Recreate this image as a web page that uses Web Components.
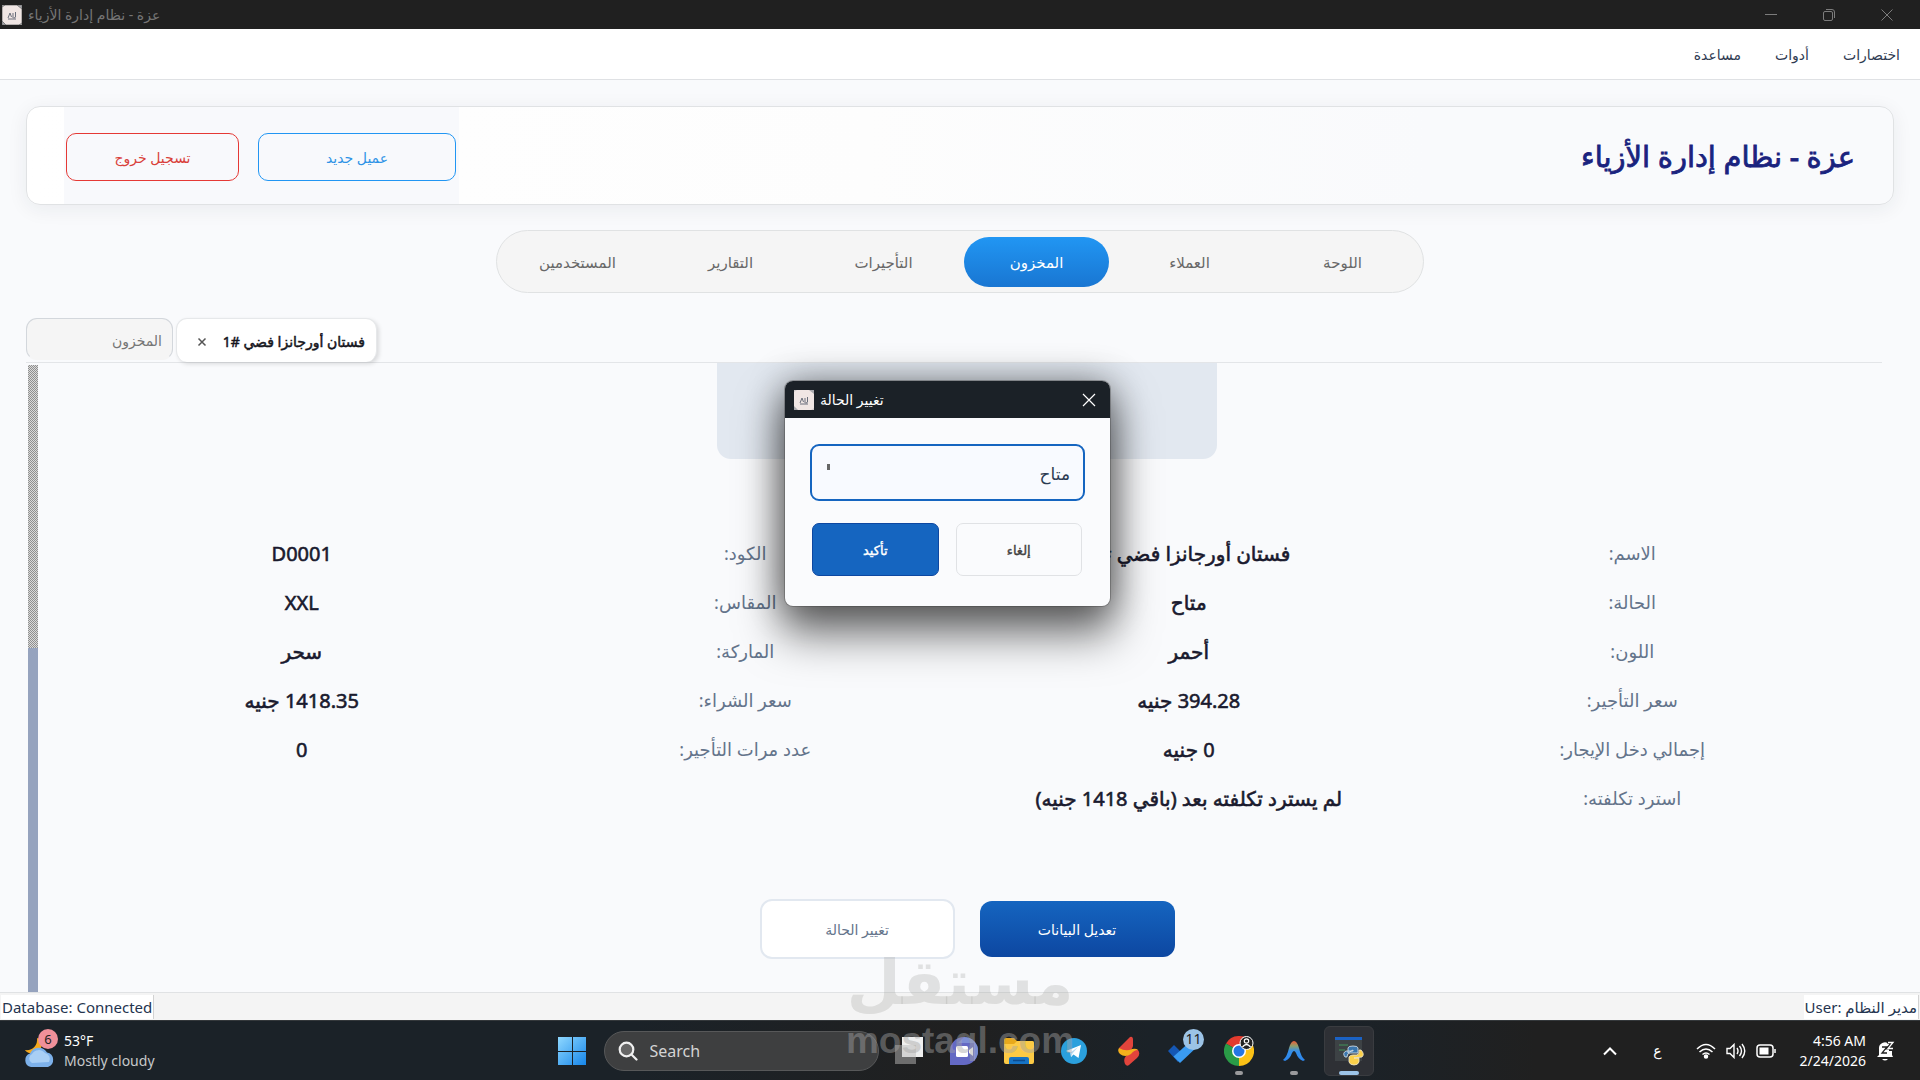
<!DOCTYPE html>
<html lang="ar">
<head>
<meta charset="utf-8">
<title>عزة - نظام إدارة الأزياء</title>
<style>
  html, body { margin: 0; height: 100%; }
  body { font-family: "Noto Sans", "DejaVu Sans", sans-serif; font-size: 15px; overflow: hidden; }
</style>
</head>
<body>
<app-desktop></app-desktop>

<script>
const base = `*, *::before, *::after { box-sizing: border-box; } button, select, input { font: inherit; margin: 0; } svg { display: block; }`;

function component(name, css, html, setup) {
  const template = document.createElement('template');
  template.innerHTML = `<style>${base}${css}</style>${html}`;
  customElements.define(name, class extends HTMLElement {
    constructor() {
      super();
      this.attachShadow({ mode: 'open' }).append(template.content.cloneNode(true));
    }
    connectedCallback() { if (setup) setup(this, this.shadowRoot); }
  });
}

const appIcon = size => `<svg width="${size}" height="${size}" viewBox="0 0 20 20" aria-hidden="true">
  <rect width="20" height="20" fill="#f0e6e4"/>
  <path d="M0 16L4 20H0zM15 0h5v4z" fill="#a9a9ae"/><path d="M0 0h3L0 2zM20 18v2h-3z" fill="#cfc9ca"/>
  <path d="M6 13l2-5 1.500 4M11 8v5M13.500 7v5q0 1-2 1M6 14h8" fill="none" stroke="#6a6f7c" stroke-width="1"/></svg>`;

component('title-bar', `
  :host { display: flex; align-items: center; height: 29px; padding: 0 4px 0 2px; background: #202020; color: #757575; direction: ltr; }
  span { flex: 1; padding-left: 6px; font-size: 14px; line-height: 20px; }
  button { width: 58px; height: 29px; border: 0; background: none; display: grid; place-items: center; padding: 0; }
  .tools { display: flex; }
  svg { fill: none; stroke: #7c7c7c; }`,
  `${appIcon(20)}<span dir="auto" style="text-align:left"><slot></slot></span>
  <div class="tools">
  <button aria-label="Minimize"><svg width="14" height="14"><path d="M1 6.500h12"/></svg></button>
  <button aria-label="Restore"><svg width="14" height="14"><rect x="1.500" y="3.500" width="9" height="9" rx="1.500"/><path d="M4 1.500h6a2.500 2.500 0 0 1 2.500 2.500v6"/></svg></button>
  <button aria-label="Close"><svg width="14" height="14"><path d="M1.500 1.500l11 11M12.500 1.500l-11 11"/></svg></button></div>`);

component('menu-bar', `
  :host { display: flex; align-items: center; gap: 34px; height: 51px; padding: 2px 20px 0; background: #fff; border-bottom: 1px solid #dfe1e4; direction: rtl; }
  button { border: 0; padding: 0; background: none; color: #2f3b52; font-size: 14px; line-height: 24px; }`,
  `<button>اختصارات</button><button>أدوات</button><button>مساعدة</button>`);

component('app-button', `
  :host { display: block; }
  button { width: 100%; height: 100%; border-radius: 10px; padding: 2px 0 0; background: none; font-size: 14px; line-height: 22px; }
  :host([kind=danger]) button { border: 1px solid #e53935; color: #d9403a; }
  :host([kind=info]) button { border: 1px solid #2196f3; color: #2e93e6; }
  :host([kind=primary]) button { border: 0; border-radius: 12px; color: #fff; background: linear-gradient(#1565c0, #0d47a1); }
  :host([kind=plain]) button { border: 2px solid #e2e8f0; border-radius: 12px; color: #64748b; background: #fff; }
  :host([kind=confirm]) button, :host([kind=cancel]) button { border: 1px solid #0d47a1; border-radius: 7px; padding: 0; color: #fff; background: #1565c0; font-size: 13px; -webkit-text-stroke: .4px currentColor; }
  :host([kind=cancel]) button { border-color: #e0e2e5; color: #424242; background: none; }`,
  `<button><slot></slot></button>`);

component('page-header', `
  :host { display: flex; align-items: stretch; justify-content: space-between; height: 99px; padding: 0 38px 0 37px; direction: rtl;
    border: 1px solid #e0e2e4; border-radius: 14px; box-shadow: 0 4px 20px rgba(30,40,60,.07);
    background: linear-gradient(90deg, #fff, #fdfdfd 45%, #f9fafc 75%, #f9fafc); }
  h1 { margin: 0; align-self: center; color: #1a237e; font-size: 29px; line-height: 44px; font-weight: 500; -webkit-text-stroke: .8px currentColor; }
  .actions { display: flex; align-items: center; gap: 19px; padding: 2px 3px 0 2px; background: #f8f9fc; }
  app-button { height: 48px; }
  .new { width: 198px; } .out { width: 173px; }`,
  `<h1>عزة - نظام إدارة الأزياء</h1>
  <div class="actions"><app-button class="new" kind="info">عميل جديد</app-button><app-button class="out" kind="danger">تسجيل خروج</app-button></div>`);

component('nav-item', `
  :host { display: block; width: 145px; }
  button { width: 100%; height: 50px; border: 0; border-radius: 25px; background: none; color: #686868; font-size: 15px; line-height: 24px; }
  :host([active]) button { color: #fff; background: linear-gradient(#2196f3, #1976d2); }`,
  `<button><slot></slot></button>`);

component('main-nav', `
  :host { display: block; align-self: center; }
  nav { display: flex; align-items: center; gap: 8px; height: 63px; padding: 0 8px; border: 1px solid #e0e2e3; border-radius: 32px; background: #f5f5f5; direction: rtl; }`,
  `<nav><nav-item>اللوحة</nav-item><nav-item>العملاء</nav-item><nav-item active>المخزون</nav-item><nav-item>التأجيرات</nav-item><nav-item>التقارير</nav-item><nav-item>المستخدمين</nav-item></nav>`);

component('doc-tabs', `
  :host { display: flex; align-items: flex-start; gap: 3px; height: 45px; border-bottom: 1px solid #e3e5e8; direction: ltr; }
  .tab { display: flex; align-items: center; justify-content: space-between; height: 44px; border: 1px solid #d3d7dc; border-radius: 11px; font-size: 14px; }
  .store { width: 147px; height: 42px; padding: 4px 10px 0; background: #f5f5f5; border-bottom-color: transparent; }
  .item { width: 201px; padding: 2px 11px 0 18px; background: #fff; border-color: #e6e8ea; border-bottom: 0; box-shadow: 2px 2px 4px rgba(0,0,0,.13); }
  button { border: 0; padding: 0; background: none; line-height: 22px; white-space: nowrap; }
  .store button { width: 100%; text-align: right; color: #757575; }
  .item .name { color: #15151c; -webkit-text-stroke: .5px currentColor; }
  .close { width: 14px; color: #555; }`,
  `<div class="tab store"><button>المخزون</button></div>
  <div class="tab item"><button class="close" aria-label="إغلاق"><svg width="14" height="14" fill="none" stroke="#555" stroke-width="1.500"><path d="M3.500 3.500l7 7M10.500 3.500l-7 7"/></svg></button><button class="name" dir="rtl">فستان أورجانزا فضي #1</button></div>`);

component('detail-list', `
  :host { display: block; }
  dl { display: grid; grid-template-columns: repeat(4, 1fr); row-gap: 20px; margin: 0; text-align: center; direction: rtl; line-height: 29px; }
  dt { color: #64748b; font-size: 18px; }
  dd { margin: 0; color: #1a1a2e; font-size: 20px; -webkit-text-stroke: .6px currentColor; white-space: nowrap; }`,
  `<dl></dl>`,
  (el, root) => {
    const rows = [
      ['الاسم:', 'فستان أورجانزا فضي #1', 'الكود:', 'D0001'],
      ['الحالة:', 'متاح', 'المقاس:', 'XXL'],
      ['اللون:', 'أحمر', 'الماركة:', 'سحر'],
      ['سعر التأجير:', '394.28 جنيه', 'سعر الشراء:', '1418.35 جنيه'],
      ['إجمالي دخل الإيجار:', '0 جنيه', 'عدد مرات التأجير:', '0'],
      ['استرد تكلفته:', 'لم يسترد تكلفته بعد (باقي 1418 جنيه)']
    ];
    root.querySelector('dl').innerHTML = rows.flat().map((t, i) => i % 2 ? `<dd>${t}</dd>` : `<dt>${t}</dt>`).join('');
  });

component('item-view', `
  :host { display: flex; flex: 1; min-height: 0; overflow: hidden; direction: ltr; padding-left: 2px; }
  .track { width: 10px; margin-top: 2px; display: flex; flex-direction: column; }
  .rest { flex: 283; background: repeating-conic-gradient(#8f8f8f 0 25%, #dadada 0 50%) 0 0 / 2px 2px; }
  .thumb { flex: 344; background: #96a3be; }
  .content { flex: 1; display: flex; flex-direction: column; align-items: stretch; padding: 0 40px 0 42px; }
  .photo { width: 500px; height: 96px; align-self: center; background: #e2e8f0; border-radius: 0 0 14px 14px; }
  detail-list { margin: 80px 0 86px; }
  .actions { display: flex; justify-content: center; align-items: center; gap: 25px; direction: rtl; }
  app-button { width: 195px; height: 60px; }
  app-button[kind=primary] { height: 56px; }`,
  `<div class="track"><div class="rest"></div><div class="thumb"></div></div>
  <div class="content"><div class="photo"></div><detail-list></detail-list>
  <div class="actions"><app-button kind="primary">تعديل البيانات</app-button><app-button kind="plain">تغيير الحالة</app-button></div></div>`);

component('status-bar', `
  :host { display: flex; justify-content: space-between; align-items: center; height: 28px; border-top: 1px solid #e0e2e4; background: #f4f4f4; color: #24344f; direction: ltr; padding: 0 1px; }
  span { height: 24px; line-height: 25px; background: #fff; padding: 0 1px; border-right: 1px solid #d2d2d2; font-size: 15px; }`,
  `<span>Database: Connected</span><span>User: مدير النظام</span>`);

component('status-dialog', `
  :host { display: block; width: 325px; border-radius: 8px; overflow: hidden; background: #fafbfd; direction: rtl; box-shadow: 0 0 0 1px rgba(60,60,60,.35), 0 26px 44px 4px rgba(0,0,0,.5), 0 2px 36px rgba(0,0,0,.45); }
  header { display: flex; align-items: center; gap: 6px; height: 37px; padding: 0 14px 0 9px; background: #1b2127; color: #fff; direction: ltr; }
  header span { flex: 1; font-size: 14px; line-height: 20px; text-align: left; }
  header button { border: 0; padding: 0; background: none; }
  form { padding: 26px 25px 30px; }
  label { position: relative; display: block; height: 57px; }
  select { width: 100%; height: 57px; appearance: none; border: 2px solid #1565c0; border-radius: 9px; background: #f8faff; color: #2b3a52; font-size: 17px; padding: 2px 13px 0; outline: 0; }
  i { position: absolute; left: 17px; top: 20px; width: 3px; height: 6px; background: #666; }
  .row { display: flex; gap: 17px; padding: 22px 3px 0 2px; }
  .row app-button { flex: 1; height: 53px; }`,
  `<header>${appIcon(20)}<span>تغيير الحالة</span><button aria-label="إغلاق"><svg width="14" height="14" fill="none" stroke="#fff" stroke-width="1.200"><path d="M1 1l12 12M13 1L1 13"/></svg></button></header>
  <form onsubmit="return false"><label><select aria-label="الحالة"><option>متاح</option></select><i></i></label>
  <div class="row"><app-button kind="cancel">إلغاء</app-button><app-button kind="confirm">تأكيد</app-button></div></form>`);

component('water-mark', `
  :host { display: block; width: 232px; text-align: center; pointer-events: none; direction: ltr; }
  .ar { font: 700 62px/73px "DejaVu Sans", sans-serif; color: rgba(160,160,155,.27); }
  .en { font: 700 37px/44px "Liberation Sans", sans-serif; color: rgba(165,165,165,.45); }`,
  `<div class="ar">مستقل</div><div class="en">mostaql.com</div>`);

component('task-app', `
  :host { display: block; width: 50px; height: 50px; }
  button { position: relative; display: grid; place-items: center; width: 50px; height: 50px; border: 0; padding: 0; border-radius: 6px; background: none; }
  :host([open]) button::after, :host([current]) button::after { content: ""; position: absolute; bottom: 1px; left: 21px; width: 8px; height: 4px; border-radius: 2px; background: #9a9a9c; }
  :host([current]) button { background: #2e3035; border: 1px solid #3a3c40; }
  :host([current]) button::after { left: 14px; bottom: 0; width: 20px; background: #9cc4e8; }`,
  `<button><slot></slot></button>`,
  (el, root) => root.querySelector('button').setAttribute('aria-label', el.getAttribute('name')));

component('task-bar', `
  :host { display: grid; grid-template-columns: 1fr auto 1fr; align-items: center; height: 60px; background: linear-gradient(90deg, #1b2228, #1b2228 33%, #202020 50%, #1b2228 60%, #1b2228 70%, #202020 80%); border-top: 1px solid #34383b; color: #fff; direction: ltr; }
  .weather { position: relative; display: flex; align-items: center; gap: 9px; padding-left: 24px; font-size: 14px; line-height: 20px; }
  .weather span { color: #c6c8ca; display: block; }
  .badge { position: absolute; display: grid; place-items: center; border-radius: 50%; color: #222; font-size: 13px; line-height: 20px; font-weight: 400; }
  .weather .badge { left: 38px; top: -2px; width: 20px; height: 20px; background: #f0909a; }
  .apps { display: flex; align-items: center; gap: 5px; }
  .search { display: flex; align-items: center; gap: 12px; width: 275px; height: 40px; padding: 0 14px 0 13px; margin-left: 2px; border: 1px solid #575859; border-radius: 20px; background: #3e3f40; }
  .search input { width: 100%; border: 0; outline: 0; padding: 0; background: none; color: #ddd; font-size: 16px; }
  .search input::placeholder { color: #d4d4d4; opacity: 1; }
  .search svg { flex: none; }
  .todo { position: relative; }
  .todo .badge { right: -5px; top: -10px; width: 21px; height: 21px; background: #9cc3e6; font-size: 14px; }
  .tray { display: flex; align-items: center; justify-content: flex-end; padding-right: 25px; }
  .tray button { border: 0; padding: 0; background: none; color: #fff; }
  .lang { margin: 0 34px 0 36px; font-size: 14px; }
  .net { display: flex; gap: 10px; margin-right: 24px; }
  .clock { margin-right: 10px; text-align: right; font-size: 14px; line-height: 20px; }`,
  `<div class="weather"><svg width="31" height="36" viewBox="0 0 31 36"><path d="M13 5c1 8-5 13-12 12 3 5 12 5 16-2 2-5-1-9-4-10z" fill="#f5a81c"/><path d="M7 34a7 7 0 0 1-1-13.500 9.500 9.500 0 0 1 17-1A7.500 7.500 0 0 1 24 34z" fill="#7db1ea"/><path d="M8 30a5 5 0 0 1 0-9 8 8 0 0 1 13-1 6 6 0 0 1 4 9z" fill="#a9cff5"/></svg><div>53°F<span>Mostly cloudy</span></div><b class="badge">6</b></div>
  <div class="apps">
    <task-app name="Start"><svg width="30" height="30"><defs><linearGradient id="w" x2="1" y2="1"><stop stop-color="#8fd8ff"/><stop offset="1" stop-color="#1686ea"/></linearGradient></defs><path d="M1 1h14v14H1zM16 1h13v14H16zM1 16h14v13H1zM16 16h13v13H16z" fill="url(#w)"/></svg></task-app>
    <label class="search"><svg width="20" height="20" fill="#666" stroke="#f0f0f0" stroke-width="2.200" stroke-linecap="round"><circle cx="8.500" cy="8.500" r="6.800"/><path d="M13.500 13.500l5 5"/></svg><input type="search" placeholder="Search" aria-label="Search"></label>
    <task-app name="Task view"><svg width="30" height="30"><rect x="1" y="9" width="21" height="19" fill="#6d6d6d"/><rect x="8" y="1" width="21" height="20" fill="#efefef"/><path d="M8 9h14v12H8z" fill="#d4d4d4"/></svg></task-app>
    <task-app name="Chat"><svg width="28" height="28"><path d="M14 0a14 14 0 1 1 0 28H0V14A14 14 0 0 1 14 0z" fill="#6469c4"/><path d="M14 0a14 14 0 0 1 10 24V6H8z" fill="#88a0dc" opacity=".7"/><rect x="6" y="9" width="12" height="11" rx="1.500" fill="#fff"/><path d="M19 13l4-3v9l-4-3z" fill="#fff"/></svg></task-app>
    <task-app name="File Explorer"><svg width="30" height="28"><path d="M0 3a2 2 0 0 1 2-2h8l3 3h15a2 2 0 0 1 2 2v5H0z" fill="#e8a91c"/><path d="M0 7h10l3-3h15a2 2 0 0 1 2 2v19a2 2 0 0 1-2 2H2a2 2 0 0 1-2-2z" fill="#fcca45"/><path d="M5 27v-5a2 2 0 0 1 2-2h16a2 2 0 0 1 2 2v5z" fill="#1673c4"/><path d="M9 23.500h12" stroke="#0c4b8e" stroke-width="1.500"/></svg></task-app>
    <task-app name="Telegram"><svg width="26" height="26"><circle cx="13" cy="13" r="13" fill="#2ba0dd"/><path d="M5 13L20 7l-2.500 13-5-3.500-2.500 2.500-.500-4.500z" fill="#fff"/><path d="M9.500 14.500L17 9l-5.500 6.500-1.500 3.500z" fill="#b9d9ee"/></svg></task-app>
    <task-app name="S"><svg width="22" height="30" viewBox="0 0 22 30"><path d="M1 12L12 1q3-1 3 3v6q-1 5-7 6-6 1-7-4z" fill="#e2443c"/><path d="M20 14q3 4-1 8L11 29q-2 2-4-1-2-5 1-8l5-5q4-3 7-1z" fill="#e2443c"/><path d="M1 12q7 4 13 1 4-1 6 1-4 0-7 4-6 4-11 0-3-3-1-6z" fill="#f5b01c"/></svg></task-app>
    <task-app name="To Do"><span class="todo"><svg width="31" height="24" viewBox="0 0 31 24"><path d="M0 12l6-6 9 9-5 8z" fill="#1557b4"/><path d="M5.500 17.500L24 1l6 6-18 17z" fill="#3a9bf2"/></svg><b class="badge">11</b></span></task-app>
    <task-app name="Chrome" open><svg width="30" height="30" viewBox="0 0 30 30"><path d="M15 15L2 7.500A15 15 0 0 1 28 7.500z" fill="#e33b2e"/><path d="M15 15L28 7.500A15 15 0 0 1 15 30z" fill="#fbc116"/><path d="M15 15v15A15 15 0 0 1 2 7.500z" fill="#2a9b47"/><path d="M15 8h13l-6 11-7 11 6-12z" fill="#fbc116"/><circle cx="15" cy="15" r="7" fill="#fff"/><circle cx="15" cy="15" r="5.500" fill="#2476e4"/><circle cx="22.500" cy="7" r="6.500" fill="#222" stroke="#fff"/><circle cx="22.500" cy="5" r="2.200" fill="none" stroke="#fff" stroke-width="1.200"/><path d="M18.500 11q4-5 8 0" fill="none" stroke="#fff" stroke-width="1.300"/></svg></task-app>
    <task-app name="Editor" open><svg width="22" height="22"><defs><linearGradient id="a" x2="0" y2="1"><stop stop-color="#ef5b35"/><stop offset=".25" stop-color="#8f9f6b"/><stop offset=".5" stop-color="#358fe8"/><stop offset="1" stop-color="#2c86ee"/></linearGradient></defs><path d="M0 20Q4 17 6 8Q8 1 11 1Q14 1 16 8Q18 17 22 20L20 21Q15 19 13 13Q12 11 11 11Q10 11 9 13Q7 19 2 21Z" fill="url(#a)"/></svg></task-app>
    <task-app name="Python" current><svg width="30" height="30" viewBox="0 0 30 30"><rect x="1" y="1" width="27" height="24" fill="#3d4245"/><path d="M1 1h27v3H1z" fill="#1b62c4"/><path d="M5 9h9M5 14h6" stroke="#42935a"/><path d="M14 17v-5q0-2 5-2t5 2v5h-8q-3 0-3 4h-2q-3-4 1-6h7v-1z" fill="#3b76ad" stroke="#dce7ee" stroke-width=".8"/><path d="M25 14h2q4 4 1 7l-8 1h5v4q-1 3-5 3t-5-3v-5q1-2 4-2h4q3-1 2-5z" fill="#fbd04a" stroke="#f3ead0" stroke-width=".8"/></svg></task-app>
  </div>
  <div class="tray"><button aria-label="Show hidden icons"><svg width="14" height="10" fill="none" stroke="#fff" stroke-width="2"><path d="M1 8.500l6-6 6 6"/></svg></button>
  <button class="lang">ع</button>
  <div class="net"><svg width="20" height="16" fill="none" stroke="#fff" stroke-width="1.500"><path d="M1 6q9-9 18 0M3.500 9q6.500-6 13 0M6.500 11.500q3.500-3 7 0"/><circle cx="10" cy="13.500" r="1.500" fill="#fff"/></svg>
  <svg width="20" height="16" fill="none" stroke="#fff" stroke-width="1.400"><path d="M1 5.500h3l4-4v13l-4-4H1zM11 5q2 3 0 6M13.500 3q4 5 0 10M16 1q5.500 7 0 14"/></svg>
  <svg width="20" height="16" fill="none" stroke="#fff" stroke-width="1.500"><rect x="1" y="2" width="16" height="12" rx="3"/><rect x="3.500" y="4.500" width="9" height="7" fill="#fff" stroke="none"/><path d="M19 6v4"/></svg></div>
  <div class="clock">4:56 AM<br>2/24/2026</div>
  <svg width="19" height="20"><path d="M3 14V8a6 6 0 0 1 10-5v7h3v4l1 2H1zM6 18h6q-3 3-6 0z" fill="#fff"/><path d="M6 6h5l-5 6h5" fill="none" stroke="#222" stroke-width="1.300"/><path d="M11 1h6l-5 6h6" fill="none" stroke="#202020" stroke-width="3"/><path d="M12 1.500h5l-5 6h5" fill="none" stroke="#fff" stroke-width="1.300"/></svg></div>`);

component('app-desktop', `
  :host { display: flex; flex-direction: column; position: relative; height: 100vh; overflow: hidden; background: #f9fafc; }
  main { flex: 1; min-height: 0; display: flex; flex-direction: column; padding: 26px 26px 0; direction: rtl; }
  main-nav { margin: 25px 0; }
  doc-tabs { margin-right: 12px; }
  status-dialog { position: absolute; left: calc(50% - 175px); top: 381px; }
  water-mark { position: absolute; left: calc(50% - 116px); bottom: 17px; }`,
  `<title-bar>عزة - نظام إدارة الأزياء</title-bar>
  <menu-bar></menu-bar>
  <main><page-header></page-header><main-nav></main-nav><doc-tabs></doc-tabs><item-view></item-view></main>
  <status-bar></status-bar><task-bar></task-bar>
  <status-dialog role="dialog" aria-label="تغيير الحالة"></status-dialog>
  <water-mark></water-mark>`);
</script>
</body>
</html>
